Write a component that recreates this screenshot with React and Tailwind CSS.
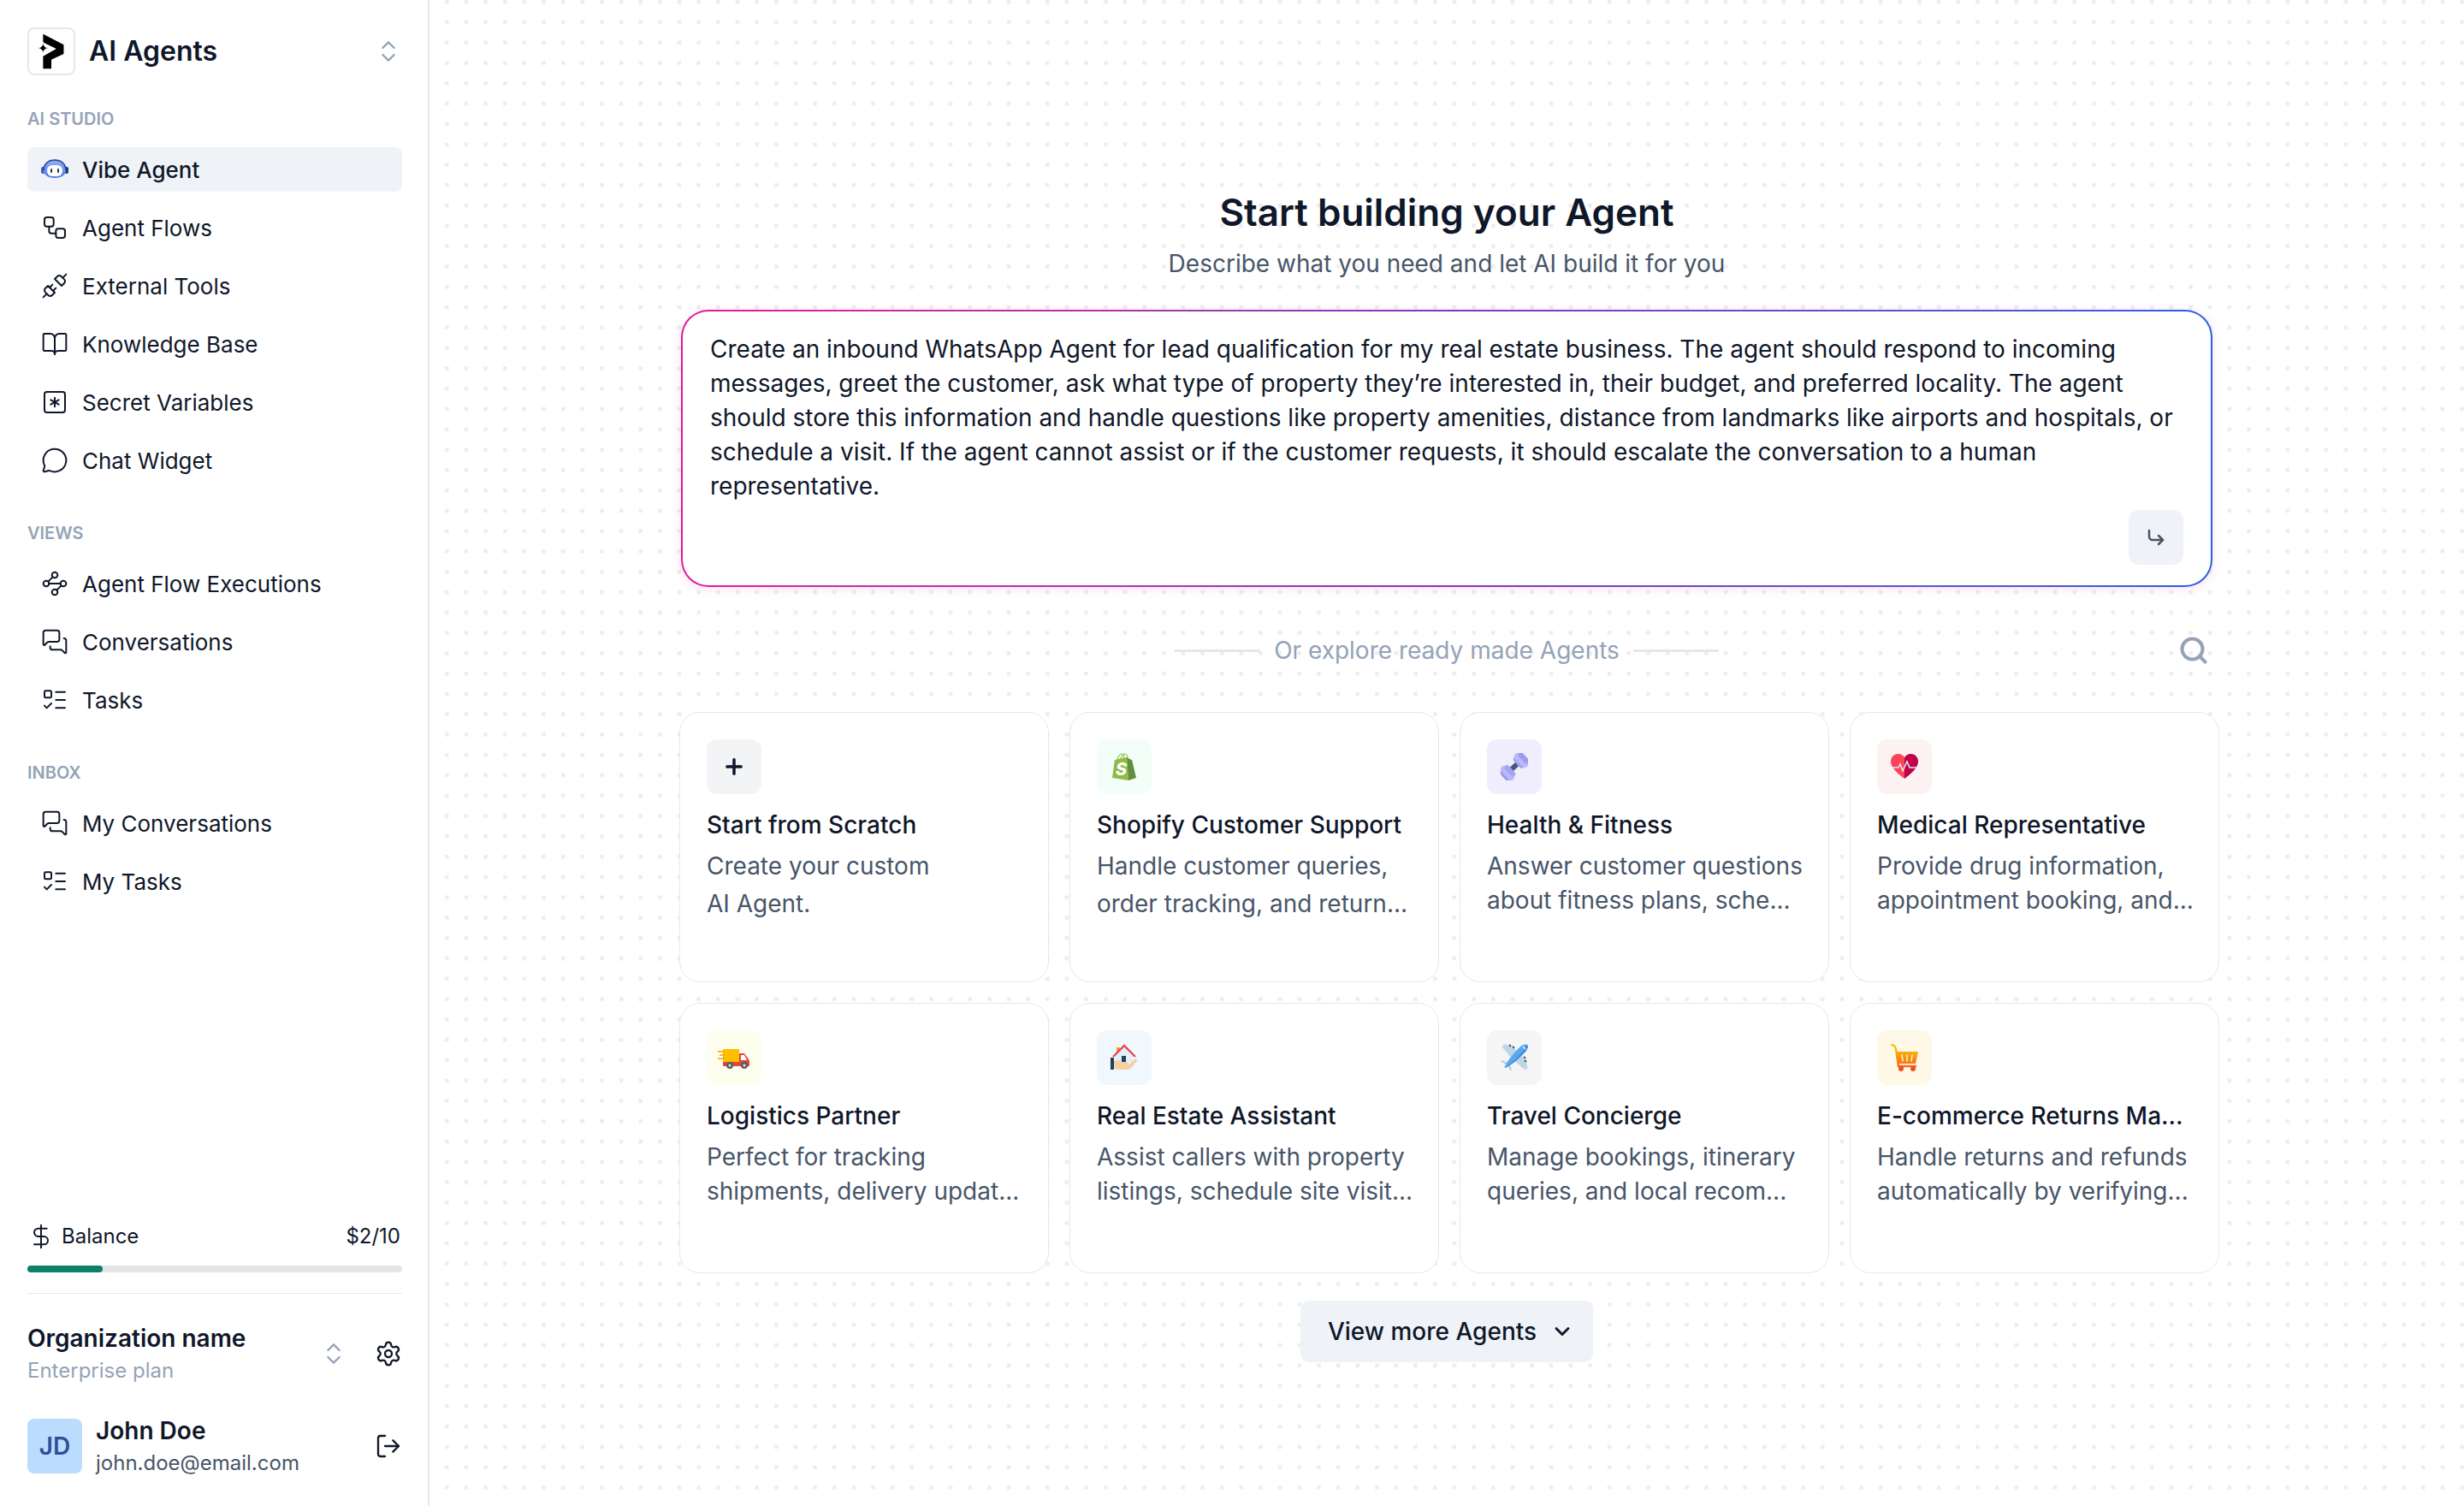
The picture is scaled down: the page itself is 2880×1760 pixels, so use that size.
import React, { useState } from 'react'
import {
  BookOpen,
  ChevronDown,
  ChevronsUpDown,
  CornerDownRight,
  DollarSign,
  ListTodo,
  LogOut,
  MessageCircle,
  MessagesSquare,
  Plus,
  Search,
  Settings,
  SquareAsterisk,
  Unplug,
  Waypoints,
} from 'lucide-react'

const DEFAULT_PROMPT =
  'Create an inbound WhatsApp Agent for lead qualification for my real estate business. The agent should respond to incoming messages, greet the customer, ask what type of property they’re interested in, their budget, and preferred locality. The agent should store this information and handle questions like property amenities, distance from landmarks like airports and hospitals, or schedule a visit. If the agent cannot assist or if the customer requests, it should escalate the conversation to a human representative.'

/* ---------- Drawn icons ---------- */

const LogoMark = () => (
  <svg viewBox="0 0 54 54" className="w-full h-full" aria-hidden="true">
    <path d="M17 6 42 19V30L27 37V48H17V33L33 24 17 16Z" fill="#000" />
    <path
      d="M17 16c1 5 2 6 7 7-5 1-6 2-7 7-1-5-2-6-7-7 5-1 6-2 7-7Z"
      fill="#000"
      stroke="#fff"
      strokeWidth="1"
    />
  </svg>
)

const BotIcon = ({ className }) => (
  <svg viewBox="0 0 32 32" className={className} aria-hidden="true">
    <defs>
      <linearGradient id="bot" x1="0" y1="0" x2="0" y2="1">
        <stop offset="0" stopColor="#8fb0f7" />
        <stop offset="1" stopColor="#4f7af0" />
      </linearGradient>
    </defs>
    <rect x="0" y="13" width="5" height="8" rx="2" fill="#3d63c9" />
    <rect x="27" y="13" width="5" height="8" rx="2" fill="#1f3a7d" />
    <path d="M3 17C3 9 9 5 16 5s13 4 13 12c0 6-6 9-13 9S3 23 3 17Z" fill="url(#bot)" />
    <path d="M3 17C3 9 9 5 16 5s13 4 13 12" fill="none" stroke="#24418c" strokeWidth="1.5" />
    <rect x="7" y="11" width="18" height="13" rx="6" fill="#fff" />
    <rect x="11" y="15" width="2" height="5" rx="1" fill="#1d2f63" />
    <rect x="19" y="15" width="2" height="5" rx="1" fill="#1d2f63" />
  </svg>
)

const FlowIcon = ({ className, strokeWidth }) => (
  <svg
    viewBox="0 0 24 24"
    className={className}
    fill="none"
    stroke="currentColor"
    strokeWidth={strokeWidth}
    strokeLinecap="round"
    strokeLinejoin="round"
    aria-hidden="true"
  >
    <rect x="3" y="3" width="8" height="8" rx="2" />
    <path d="M7 11v4a2 2 0 0 0 2 2h4" />
    <rect x="13" y="13" width="8" height="8" rx="2" />
  </svg>
)

const ShopifyIcon = () => (
  <svg viewBox="0 0 32 32" className="w-8 h-8" aria-hidden="true">
    <path
      d="M8 9c0-4 3-8 5-8s3 3 3 6M12 8c0-4 3-7 5-7s3 3 3 5"
      fill="none"
      stroke="#8fbb40"
      strokeWidth="1.2"
    />
    <path d="M5 8 19 5l2 27-19-3Z" fill="#8fbb40" />
    <path d="m19 5 3 2 3 1 5 21-9 3Z" fill="#5e8e3e" />
    <text x="6" y="26" fontFamily="Inter, sans-serif" fontSize="20" fontWeight="800" fontStyle="italic" fill="#fff">
      S
    </text>
  </svg>
)

const DumbbellIcon = () => (
  <svg viewBox="0 0 32 32" className="w-8 h-8" aria-hidden="true">
    <g transform="rotate(-43 16 16)">
      <rect x="10" y="13" width="12" height="6" fill="#4f5283" />
      <rect x="-2" y="8" width="9" height="16" rx="4" fill="#9b9cf0" />
      <rect x="1" y="6" width="8" height="20" rx="4" fill="#b9bafa" />
      <rect x="6" y="8" width="6" height="16" rx="3" fill="#a3a5f5" />
      <rect x="20" y="8" width="6" height="16" rx="3" fill="#a3a5f5" />
      <rect x="23" y="6" width="8" height="20" rx="4" fill="#b9bafa" />
      <rect x="28" y="8" width="6" height="16" rx="3" fill="#9b9cf0" />
    </g>
  </svg>
)

const HeartIcon = () => (
  <svg viewBox="0 0 32 32" className="w-8 h-8" aria-hidden="true">
    <path d="M16 30C7 23 0 17 0 10c0-5 3.500-9 8.500-9 3.500 0 6 1.500 7.500 4.500Z" fill="#fb4458" />
    <path d="M16 30c9-7 16-13 16-20 0-5-3.500-9-8.500-9-3.500 0-6 1.500-7.500 4.500Z" fill="#c1004a" />
    <path d="M2 17h7l2-4 3 8 5-11 3 7h8" fill="none" stroke="#e3e4f4" strokeWidth="1.6" />
  </svg>
)

const TruckIcon = () => (
  <svg viewBox="0 0 40 32" className="w-10 h-8" aria-hidden="true">
    <path d="M26 11h6l5 7 1 2v6H7v-5h19Z" fill="#e5443a" />
    <path d="M28 13h4l3 6h-7Z" fill="#fff" />
    <path d="M7 6h19v15H7Z" fill="#fcc000" />
    <path d="M1 9h7M3 13h6M1 17h8" stroke="#f59c0c" strokeWidth="1.6" />
    <circle cx="15" cy="25" r="4" fill="#5b5c5f" />
    <circle cx="15" cy="25" r="1.5" fill="#e6e6e6" />
    <circle cx="32" cy="25" r="4" fill="#5b5c5f" />
    <circle cx="32" cy="25" r="1.5" fill="#e6e6e6" />
  </svg>
)

const HouseIcon = () => (
  <svg viewBox="0 0 32 32" className="w-8 h-8" aria-hidden="true">
    <path d="M7 4h4v8H7Z" fill="#f59a1f" />
    <path d="M6 13 16 3l10 10v14H6Z" fill="#e4eefb" />
    <path d="M13 14h5v9h-5Z" fill="#22415c" />
    <path d="M3 15 16 2l13 13" fill="none" stroke="#e8474f" strokeWidth="2.4" />
    <path d="M3 20c5-2 7 0 10 1h6c2 0 2 3 0 3h3l6-6c2-1 4 0 3 2l-6 7c-1 2-3 3-5 3H8l-5-2Z" fill="#f6d09f" />
    <path d="M0 16h4v14H0Z" fill="#22415c" />
  </svg>
)

const PlaneIcon = () => (
  <svg viewBox="0 0 32 32" className="w-8 h-8" aria-hidden="true">
    <path d="M3 1c2-1 4 0 6 1l12 7-8 8L2 4Z" fill="#bdd6e6" />
    <path d="M31 29c1-2 0-4-1-6l-7-12-8 8 13 11Z" fill="#bdd6e6" />
    <path d="M0 20c1-1 3-1 4 0l5 3 3 5c1 1 1 3 0 4L8 25Z" fill="#a9cbe0" />
    <path d="M31 1c2 2 0 5-2 8C22 16 15 23 6 28c-1 0-2 0-1-2C9 18 16 10 23 3c3-2 6-3 8-2Z" fill="#5aa9ee" />
    <path d="M31 1c2 2 0 5-2 8C22 16 15 23 6 28 14 21 26 11 31 1Z" fill="#3c8ade" />
    <path d="m26 3 3 3" stroke="#d9edfb" strokeWidth="1.5" />
    <path d="m10 1 2 2M14 3l2 2M28 19l2 2M27 15l2 2" stroke="#3d5663" strokeWidth="2" />
  </svg>
)

const CartIcon = () => (
  <svg viewBox="0 0 32 32" className="w-8 h-8" aria-hidden="true">
    <defs>
      <linearGradient id="cart" gradientUnits="userSpaceOnUse" x1="0" y1="0" x2="0" y2="32">
        <stop offset="0" stopColor="#f5d000" />
        <stop offset=".35" stopColor="#fba70a" />
        <stop offset="1" stopColor="#f0501a" />
      </linearGradient>
    </defs>
    <path d="M1 1c3 0 4 2 5 5l3 20h20" fill="none" stroke="url(#cart)" strokeWidth="2.4" strokeLinecap="round" />
    <path d="M6 9h26l-3 14H9Z" fill="url(#cart)" />
    <path d="m13 13 1 7M19 13v7M25 13l-1 7" stroke="#fff3cf" strokeWidth="1.6" strokeLinecap="round" />
    <circle cx="12" cy="29" r="3" fill="#f0501a" />
    <circle cx="26" cy="29" r="3" fill="#f0501a" />
  </svg>
)

/* ---------- Data ---------- */

const sections = [
  {
    title: 'AI STUDIO',
    items: [
      { label: 'Vibe Agent', icon: BotIcon, active: true },
      { label: 'Agent Flows', icon: FlowIcon },
      { label: 'External Tools', icon: Unplug },
      { label: 'Knowledge Base', icon: BookOpen },
      { label: 'Secret Variables', icon: SquareAsterisk },
      { label: 'Chat Widget', icon: MessageCircle },
    ],
  },
  {
    title: 'VIEWS',
    items: [
      { label: 'Agent Flow Executions', icon: Waypoints },
      { label: 'Conversations', icon: MessagesSquare },
      { label: 'Tasks', icon: ListTodo },
    ],
  },
  {
    title: 'INBOX',
    items: [
      { label: 'My Conversations', icon: MessagesSquare },
      { label: 'My Tasks', icon: ListTodo },
    ],
  },
]

const agents = [
  {
    title: 'Start from Scratch',
    lines: ['Create your custom', 'AI Agent.'],
    icon: <Plus className="w-7 h-7 text-[#0f172a]" strokeWidth={3} />,
    tile: 'bg-[#f3f4f6]',
    relaxed: true,
  },
  {
    title: 'Shopify Customer Support',
    lines: ['Handle customer queries,', 'order tracking, and return...'],
    icon: <ShopifyIcon />,
    tile: 'bg-[#f3fef8]',
    relaxed: true,
  },
  {
    title: 'Health & Fitness',
    lines: ['Answer customer questions', 'about fitness plans, sche...'],
    icon: <DumbbellIcon />,
    tile: 'bg-[#f0eefc]',
  },
  {
    title: 'Medical Representative',
    lines: ['Provide drug information,', 'appointment booking, and...'],
    icon: <HeartIcon />,
    tile: 'bg-[#fdf2f2]',
  },
  {
    title: 'Logistics Partner',
    lines: ['Perfect for tracking', 'shipments, delivery updat...'],
    icon: <TruckIcon />,
    tile: 'bg-[#fefeee]',
  },
  {
    title: 'Real Estate Assistant',
    lines: ['Assist callers with property', 'listings, schedule site visit...'],
    icon: <HouseIcon />,
    tile: 'bg-[#f1f8fd]',
  },
  {
    title: 'Travel Concierge',
    lines: ['Manage bookings, itinerary', 'queries, and local recom...'],
    icon: <PlaneIcon />,
    tile: 'bg-[#f5f5f5]',
  },
  {
    title: 'E-commerce Returns Ma...',
    lines: ['Handle returns and refunds', 'automatically by verifying...'],
    icon: <CartIcon />,
    tile: 'bg-[#fef9e7]',
  },
]

/* ---------- Sidebar ---------- */

const NavItem = ({ item }) => {
  const Icon = item.icon
  return (
    <a
      href="#"
      className={`flex items-center gap-4 h-[52px] pl-4 rounded-lg text-[26px] text-[#0f172a] ${
        item.active ? 'bg-[#eff3f8] font-medium' : ''
      }`}
    >
      <Icon className="w-8 h-8" strokeWidth={1.5} />
      {item.label}
    </a>
  )
}

const Sidebar = () => (
  <aside className="flex flex-col shrink-0 w-[502px] border-r-2 border-[#e2e8f0] bg-white pl-8 pr-[30px] py-8">
    <button type="button" className="flex items-center gap-4 text-left">
      <span className="w-14 h-14 rounded-lg border-2 border-[#e2e8f0]">
        <LogoMark />
      </span>
      <span className="flex-1 text-[32px] leading-10 font-semibold text-[#0f172a]">AI Agents</span>
      <ChevronsUpDown className="w-8 h-8 text-[#94a3b8]" strokeWidth={1.75} />
    </button>

    <nav className="flex flex-col gap-11 mt-9">
      {sections.map((section) => (
        <div key={section.title}>
          <h2 className="text-[20px] leading-[30px] font-semibold text-[#94a3b8]">{section.title}</h2>
          <div className="flex flex-col gap-4 mt-[18px]">
            {section.items.map((item) => (
              <NavItem key={item.label} item={item} />
            ))}
          </div>
        </div>
      ))}
    </nav>

    <div className="mt-auto">
      <div className="flex items-center gap-2 pr-[2px] text-[24px] leading-8 text-[#0f172a]">
        <DollarSign className="w-8 h-8" strokeWidth={1.5} />
        <span className="flex-1">Balance</span>
        <span>$2/10</span>
      </div>
      <div className="h-2 mt-[18px] rounded-full bg-[#e4e5e6]">
        <div className="h-2 w-1/5 rounded-full bg-[#0d7f6b]" />
      </div>
    </div>

    <div className="flex items-center mt-6 pt-8 border-t border-[#e2e8f0]">
      <div className="flex-1">
        <div className="text-[28px] leading-10 font-semibold text-[#0f172a]">Organization name</div>
        <div className="text-[24px] leading-9 text-[#94a3b8]">Enterprise plan</div>
      </div>
      <button type="button" aria-label="Switch organization">
        <ChevronsUpDown className="w-8 h-8 text-[#94a3b8]" strokeWidth={1.75} />
      </button>
      <button type="button" aria-label="Settings" className="ml-8">
        <Settings className="w-8 h-8 text-[#0f172a]" strokeWidth={1.75} />
      </button>
    </div>

    <div className="flex items-center mt-8">
      <div className="flex items-center justify-center w-16 h-16 rounded-lg bg-[#bbdcfd] text-[28px] font-semibold text-[#2c4f9c]">
        JD
      </div>
      <div className="flex-1 ml-4">
        <div className="text-[28px] leading-10 font-semibold text-[#0f172a]">John Doe</div>
        <div className="text-[24px] leading-9 text-[#475569]">john.doe@email.com</div>
      </div>
      <button type="button" aria-label="Log out">
        <LogOut className="w-8 h-8 text-[#0f172a]" strokeWidth={1.75} />
      </button>
    </div>
  </aside>
)

/* ---------- Main ---------- */

const DotGrid = () => (
  <svg className="absolute inset-0 w-full h-full" aria-hidden="true">
    <defs>
      <pattern id="dots" width={1 / 105} height={1 / 74}>
        <rect x="18" y="0" width="4.5" height="4.5" fill="#ededed" />
      </pattern>
    </defs>
    <rect width="100%" height="100%" fill="url(#dots)" />
  </svg>
)

const PromptBox = () => {
  const [prompt, setPrompt] = useState(DEFAULT_PROMPT)

  return (
    <form
      onSubmit={(e) => e.preventDefault()}
      className="mt-[34px] p-[2px] rounded-[32px] bg-linear-to-r from-[#e31896] via-[#8436bd] to-[#2560e0] shadow-[0_2px_12px_rgba(219,39,180,0.15)]"
    >
      <div className="flex flex-col rounded-[30px] bg-white px-8 py-6">
        <textarea
          aria-label="Describe your agent"
          value={prompt}
          onChange={(e) => setPrompt(e.target.value)}
          className="h-[208px] w-full resize-none overflow-hidden text-[28px] leading-10 text-[#0f172a] outline-none"
        />
        <button
          type="submit"
          aria-label="Build agent"
          className="flex items-center justify-center self-end w-16 h-16 rounded-xl bg-[#eff3f8]"
        >
          <CornerDownRight className="w-6 h-6 text-[#475569]" strokeWidth={2.5} />
        </button>
      </div>
    </form>
  )
}

const AgentCard = ({ agent }) => (
  <button
    type="button"
    className="flex flex-col items-start h-[316px] p-[31px] rounded-3xl border border-[#e2e8f0] bg-white text-left text-[28px] whitespace-nowrap"
  >
    <span className={`flex items-center justify-center w-16 h-16 rounded-xl ${agent.tile}`}>{agent.icon}</span>
    <span className="mt-4 leading-10 font-medium text-[#0f172a]">{agent.title}</span>
    <span className={`text-[#475569] ${agent.relaxed ? 'mt-[6px] leading-11' : 'mt-2 leading-10'}`}>
      {agent.lines[0]}
      <br />
      {agent.lines[1]}
    </span>
  </button>
)

const App = () => (
  <div className="flex min-h-screen bg-white font-['Inter',sans-serif]">
    <Sidebar />

    <main className="relative flex-1">
      <DotGrid />
      <div className="relative w-full max-w-[1790px] mx-auto pt-[220px]">
        <h1 className="text-[44px] leading-14 font-semibold text-center text-[#0f172a]">Start building your Agent</h1>
        <p className="mt-3 text-[28px] leading-10 text-center text-[#475569]">
          Describe what you need and let AI build it for you
        </p>

        <PromptBox />

        <div className="flex items-center h-20 mt-[34px] text-[28px] text-[#94a3b8]">
          <div className="flex flex-1 items-center justify-center gap-4 pl-10">
            <span className="w-[100px] h-[3px] bg-[#e2e8f0]" />
            Or explore ready made Agents
            <span className="w-[100px] h-[3px] bg-[#e2e8f0]" />
          </div>
          <button type="button" aria-label="Search agents" className="mr-1">
            <Search className="w-9 h-9" strokeWidth={2.75} />
          </button>
        </div>

        <div className="grid grid-cols-[repeat(4,432px)] gap-6 mt-8 -ml-[2px]">
          {agents.map((agent) => (
            <AgentCard key={agent.title} agent={agent} />
          ))}
        </div>

        <div className="flex justify-center mt-8">
          <button
            type="button"
            className="flex items-center gap-4 h-[72px] pl-8 pr-[22px] rounded-[10px] bg-[#eff3f8] text-[28px] font-medium text-[#0f172a]"
          >
            View more Agents
            <ChevronDown className="w-7 h-7" strokeWidth={2.5} />
          </button>
        </div>
      </div>
    </main>
  </div>
)

export default App
